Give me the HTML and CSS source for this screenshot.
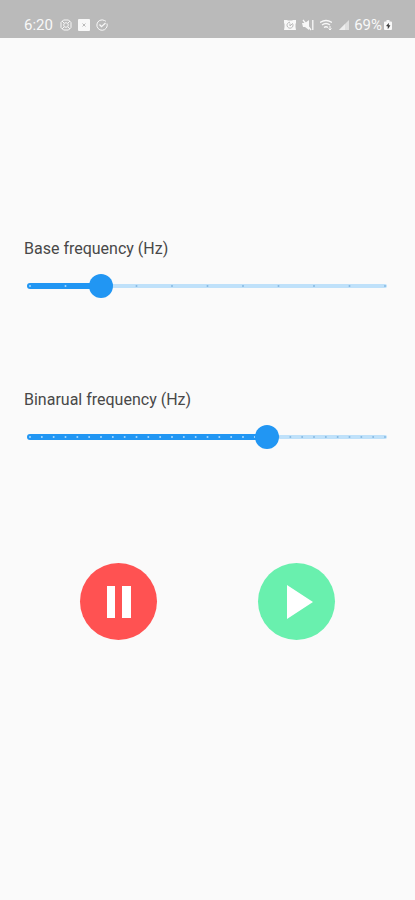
FILE: index.html
```html
<!DOCTYPE html>
<html lang="en">
<head>
<meta charset="utf-8">
<meta name="viewport" content="width=device-width, initial-scale=1">
<title>Frequency player</title>
<link rel="stylesheet" href="styles.css">
</head>
<body>
<header class="status">
  <div class="status-group">
    <span class="time">6:20</span>
    <svg class="icon" viewBox="0 0 12 12" fill="none" stroke="currentColor" aria-hidden="true"><path d="M3.500 1h5L11 3.500v5L8.500 11h-5L1 8.500v-5z"/><circle cx="6" cy="6" r="2.300"/><path d="M2 2l2 2M10 2 8 4M2 10l2-2M10 10 8 8"/></svg>
    <svg class="icon" viewBox="0 0 12 12" aria-hidden="true"><rect width="12" height="12" rx="1" fill="currentColor"/><path d="M4.500 4.500l3 3M7.500 4.500l-3 3" stroke="#bababa"/></svg>
    <svg class="icon" viewBox="0 0 12 12" fill="none" stroke="currentColor" aria-hidden="true"><path d="M11 4.500A5.200 5.200 0 1 1 8.500 1.500q1 .5 1.500 1"/><path d="M3.500 5.500l2 2.200L9.500 4" stroke-width="1.300"/></svg>
  </div>
  <div class="status-group">
    <svg class="icon" viewBox="0 0 12 12" aria-hidden="true"><path d="M0 1h3l1 .5h4L9 1h3v3l-.5 1v3l.5 3H0l.5-3V5L0 4z" fill="currentColor"/><path d="M8.500 4.500A3 3 0 1 1 6 3.200M6 4.500V7l2.500-2.500" fill="none" stroke="#bababa"/></svg>
    <svg class="icon icon-spaced" viewBox="0 0 12 12" aria-hidden="true"><path d="M0 4h3l4-3v10L3 8H1z" fill="currentColor"/><path d="M1 1l8 10M10.800 1v10" stroke="currentColor" stroke-width="1.300"/></svg>
    <svg class="icon icon-spaced" viewBox="0 0 12 12" fill="none" stroke="currentColor" aria-hidden="true"><path d="M0 3.500Q6-.5 12 3.500M2 6q4-3 8 0M4 8.500q2-1.500 4 0" stroke-width="1.300"/><path d="M10 7v4M8.500 9.500 10 11l1.500-1.500"/></svg>
    <svg class="icon icon-spaced" viewBox="0 0 12 12" aria-hidden="true"><path d="M1 11 11 1v10z" fill="currentColor" opacity=".6"/><path d="M1 11l6-6v6z" fill="currentColor" opacity=".6"/></svg>
    <span class="battery">69%</span>
    <svg class="cell" viewBox="0 0 8 12" aria-hidden="true"><path d="M2.500 1h3v1.500H7q1 0 1 1V10q0 1-1 1H1q-1 0-1-1V3.500q0-1 1-1h1.500z" fill="currentColor"/><path d="M4.500 4.500 2.500 7H4v2.500L6 6.500H4.500z" fill="#333" stroke="#333" stroke-width=".5"/></svg>
  </div>
</header>
<main class="panel">
  <section class="field">
    <label class="label" for="base">Base frequency (Hz)</label>
    <div class="slider">
      <svg class="track" aria-hidden="true">
        <line class="rest" x1="20%" x2="100%" y1="12" y2="12"/>
        <line class="filled" x1="0" x2="20%" y1="12" y2="12"/>
        <line class="ticks-rest" x1="20%" x2="100%" y1="12" y2="12" pathLength="8"/>
        <circle class="tick-end" cx="100%" cy="12" r="1"/>
        <line class="ticks-filled" x1="0" x2="20%" y1="12" y2="12" pathLength="2"/>
      </svg>
      <input class="range" id="base" type="range" min="0" max="10" step="1" value="2">
    </div>
  </section>
  <section class="field">
    <label class="label" for="binaural">Binarual frequency (Hz)</label>
    <div class="slider">
      <svg class="track" aria-hidden="true">
        <line class="rest" x1="66.667%" x2="100%" y1="12" y2="12"/>
        <line class="filled" x1="0" x2="66.667%" y1="12" y2="12"/>
        <line class="ticks-rest" x1="66.667%" x2="100%" y1="12" y2="12" pathLength="10"/>
        <circle class="tick-end" cx="100%" cy="12" r="1"/>
        <line class="ticks-filled" x1="0" x2="66.667%" y1="12" y2="12" pathLength="20"/>
      </svg>
      <input class="range" id="binaural" type="range" min="0" max="30" step="1" value="20">
    </div>
  </section>
  <div class="actions">
    <button class="round pause" type="button" aria-label="Pause"><svg viewBox="0 0 77 77" aria-hidden="true"><path d="M27 23h8v32h-8zM42 23h9v32h-9z" fill="#fff"/></svg></button>
    <button class="round play" type="button" aria-label="Play"><svg viewBox="0 0 77 77" aria-hidden="true"><path d="M29 22 55 39 29 56z" fill="#fff"/></svg></button>
  </div>
</main>
</body>
</html>
```
FILE: styles.css
```css
* {
  box-sizing: border-box;
}

body {
  margin: 0;
  min-height: 100vh;
  background: #fafafa;
  color: #484848;
  font-family: Roboto, "Liberation Sans", sans-serif;
  font-size: 16px;
  line-height: 20px;
}

.status {
  display: flex;
  justify-content: space-between;
  height: 38px;
  padding: 12px 23px 0 24px;
  background: #bababa;
  color: #f8f8f8;
  font-size: 15px;
}

.status-group {
  display: flex;
  align-items: center;
  height: 26px;
}

.time {
  margin-right: 7px;
}

.icon {
  width: 12px;
  height: 12px;
}

.time ~ .icon + .icon {
  margin-left: 6px;
}

.icon-spaced {
  margin-left: 6px;
}

.battery {
  margin: 0 2px 0 4px;
}

.cell {
  width: 8px;
  height: 12px;
}

.panel {
  padding: 201px 18px 24px;
}

.field {
  margin-bottom: 92px;
}

.label {
  display: block;
  margin: 0 6px 15px;
}

.slider {
  display: grid;
  height: 24px;
}

.track,
.range {
  grid-area: 1 / 1;
}

.track {
  width: calc(100% - 24px);
  height: 24px;
  margin: 0 12px;
  overflow: visible;
}

.track line {
  stroke-linecap: round;
}

.rest {
  stroke: #bfe1fa;
  stroke-width: 4px;
}

.filled {
  stroke: #2196f3;
  stroke-width: 6px;
}

.ticks-rest,
.ticks-filled {
  stroke-width: 2px;
  stroke-dasharray: 0 1;
}

.ticks-rest {
  stroke: #86b9e2;
}

.ticks-filled {
  stroke: #a6d8ff;
}

.tick-end {
  fill: #86b9e2;
}

.range {
  appearance: none;
  width: 100%;
  height: 24px;
  margin: 0;
  background: transparent;
}

.range::-webkit-slider-thumb {
  appearance: none;
  width: 24px;
  height: 24px;
  border: 0;
  border-radius: 50%;
  background: #2196f3;
}

.actions {
  display: grid;
  grid-template-columns: 1fr 1fr;
  justify-items: center;
  margin: 114px 11px 0;
}

.round {
  width: 77px;
  height: 77px;
  padding: 0;
  border: 0;
  border-radius: 50%;
}

.round svg {
  display: block;
}

.pause {
  background: #ff5252;
}

.play {
  background: #69f0ae;
}
```
